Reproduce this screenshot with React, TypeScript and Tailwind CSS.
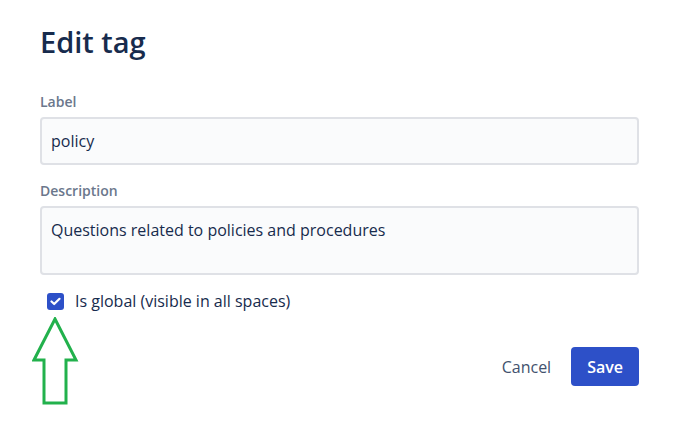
import { useState } from "react";

export default function App() {
  const [label, setLabel] = useState("policy");
  const [description, setDescription] = useState("Questions related to policies and procedures");
  const [isGlobal, setIsGlobal] = useState(true);

  return (
    <div className="relative w-[693px] h-[438px] bg-white font-['Open_Sans',sans-serif] text-[#172b4d]">
      <div className="pl-10 pr-[54px] pt-[22px]">
        <h1 className="text-[29px] leading-[40px] font-semibold text-[#172b4d]">Edit tag</h1>

        {/* Label field */}
        <label className="block mt-[31px] text-[14px] leading-[18px] font-semibold text-[#6b778c]">Label</label>
        <input
          value={label}
          onChange={(e) => setLabel(e.target.value)}
          className="mt-[6px] block w-full h-[48px] px-[9px] rounded-[4px] border-2 border-[#dfe1e6] bg-[#fafbfc] text-[16px] text-[#172b4d] outline-none"
        />

        {/* Description field */}
        <label className="block mt-[17px] text-[14px] leading-[18px] font-semibold text-[#6b778c]">Description</label>
        <textarea
          value={description}
          onChange={(e) => setDescription(e.target.value)}
          className="mt-[6px] block w-full h-[69px] px-[9px] py-[10px] rounded-[4px] border-2 border-[#dfe1e6] bg-[#fafbfc] text-[16px] leading-[24px] text-[#172b4d] outline-none resize-none"
        />

        {/* Global checkbox */}
        <label className="mt-[16px] ml-[7px] flex items-center gap-[11px] cursor-pointer">
          <span
            onClick={() => setIsGlobal(!isGlobal)}
            className={`w-[17px] h-[17px] rounded-[3px] flex items-center justify-center ${isGlobal ? "bg-[#2d50c8]" : "border-2 border-[#dfe1e6] bg-[#fafbfc]"}`}
          >
            {isGlobal && (
              <svg width="11" height="9" viewBox="0 0 11 9" fill="none">
                <path d="M1.5 4.5 L4.2 7 L9.5 1.8" stroke="white" strokeWidth="2.2" strokeLinecap="round" strokeLinejoin="round" />
              </svg>
            )}
          </span>
          <span className="text-[16px] leading-[20px] text-[#172b4d]">Is global (visible in all spaces)</span>
        </label>

        {/* Actions */}
        <div className="mt-[36px] flex justify-end items-center gap-[20px]">
          <button className="h-[39px] text-[16px] text-[#42526e]">Cancel</button>
          <button className="h-[39px] px-[16px] rounded-[4px] bg-[#2d50c8] text-white text-[16px] font-semibold">Save</button>
        </div>
      </div>

      {/* Annotation arrow */}
      <svg className="absolute left-[32px] top-[317px]" width="48" height="90" viewBox="0 0 48 90" fill="none">
        <path d="M23 2 L44 43 L34 43 L34 86 L12 86 L12 43 L2 43 Z" stroke="#22b14c" strokeWidth="3" strokeLinejoin="miter" />
      </svg>
    </div>
  );
}
